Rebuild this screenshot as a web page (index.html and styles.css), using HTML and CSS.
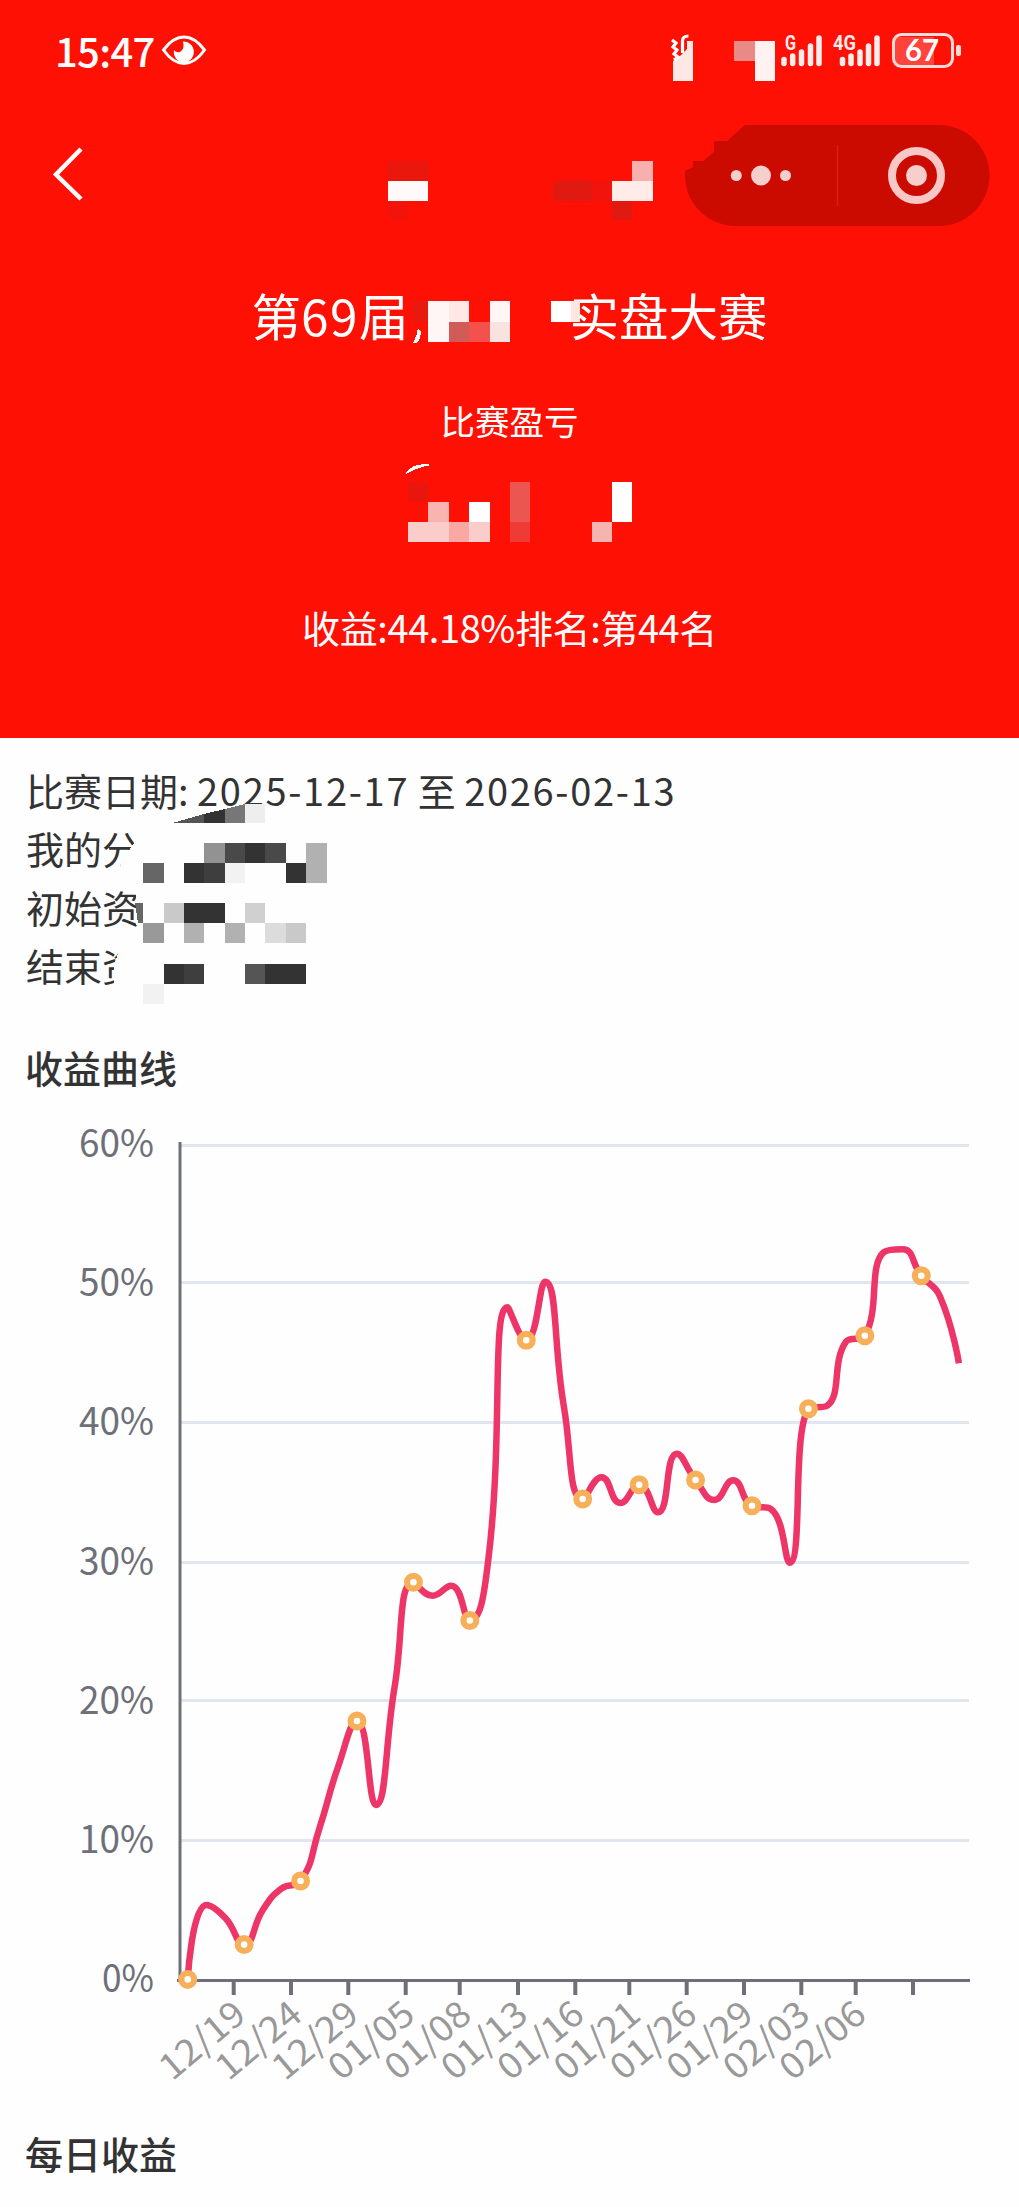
FILE: index.html
```html
<!DOCTYPE html>
<html lang="zh-CN">
<head>
<meta charset="utf-8">
<title>收益曲线</title>
<link rel="stylesheet" href="styles.css">
</head>
<body>
<header class="hero">
  <div class="status">
    <span class="clock">15:47</span>
    <svg class="eye" width="46" height="32" viewBox="0 0 46 32"><path d="M2.500 16Q12 3 23 3T43.500 16Q34 29.500 23 29.500T2.500 16Z" fill="none" stroke="#fff" stroke-width="3"/><path d="M22 7.500A10 10.500 0 1 1 13 16Q15 19 19 18Q24 15 22 7.500Z" fill="#fff"/></svg>
    <svg class="signals" width="300" height="60" viewBox="670 25 300 60">
      <path d="M673 81V61L680 56L687 49V41H693V81Z" fill="#ffe8e4"/>
      <path d="M672 40l4 3-3 4 4 3-3 4 4 3-4 3M682.500 53V41q0-5 6-5" fill="none" stroke="#fff" stroke-width="3.200"/>
      <path d="M734 41h21v20h-21z" fill="#ea8a86"/><path d="M755 41h20v40h-20z" fill="#fff2f0"/>
      <g stroke="#ffeceb" stroke-width="5.500" stroke-linecap="round"><path d="M784 59.500V63.500M792.700 56V63.500M801.500 52V63.500M810.500 46V63.500M819 38V63.500M842.500 59.500V63.500M851 56V63.500M860 52V63.500M868.500 46V63.500M877 38V63.500"/></g>
      <text class="net" x="785" y="50" textLength="11" lengthAdjust="spacingAndGlyphs">G</text>
      <text class="net" x="833" y="50" textLength="23" lengthAdjust="spacingAndGlyphs">4G</text>
      <path d="M894 37h40v28h-40z" fill="#ff443c"/>
      <rect x="893.500" y="34.500" width="59" height="32" rx="8" fill="none" stroke="#ffdad8" stroke-width="3"/>
      <rect x="956" y="45" width="5" height="11" rx="2" fill="#ffdad8"/>
      <text class="level" x="905" y="61" textLength="34" lengthAdjust="spacingAndGlyphs">67</text>
    </svg>
  </div>
  <nav class="nav">
    <svg width="32" height="56" viewBox="0 0 32 56"><path d="M29 2L4 27.500L29 52" fill="none" stroke="#fff" stroke-width="4.500"/></svg>
    <svg width="306" height="104" viewBox="684 123 306 104">
      <path d="M745 125H939A50.500 50.500 0 0 1 939 226H736A51 51 0 0 1 685 171L693 167V161H703L714 152V141H727Z" fill="#cb0b00"/>
      <path d="M837.500 145V206" stroke="#dc1c12" stroke-width="1.500"/>
      <g fill="#f6cecc"><circle cx="736.300" cy="175.500" r="5.500"/><circle cx="761" cy="175.500" r="10"/><circle cx="785.500" cy="175.500" r="5.500"/><circle cx="916.500" cy="175.500" r="10.500"/></g>
      <circle cx="916.500" cy="175.500" r="24.500" fill="none" stroke="#f9c8c6" stroke-width="8"/>
    </svg>
  </nav>
  <h1 class="title"><span>第<span class="num">69</span>届</span><span>实盘大赛</span></h1>
  <p class="subtitle">比赛盈亏</p>
  <p class="result">收益:44.18%排名:第44名</p>
  <svg class="mosaic" width="1019" height="738" viewBox="0 0 1019 738" shape-rendering="crispEdges">
    <path d="M388 161h40v20h-40z" fill="#ea170d"/><path d="M388 201h20v19h-20z" fill="#f2130a"/><path d="M388 181h40v20h-40z" fill="#fffafa"/>
    <path d="M553 181h38v20h-38zM612 201h20v19h-20z" fill="#e01a10"/><path d="M591 181h21v20h-21z" fill="#f2130c"/><path d="M632 161h21v20h-21z" fill="#f7b0ad"/><path d="M612 181h41v20h-41z" fill="#ffebe8"/>
    <path d="M412 301h16v21h-16z" fill="#e81a10"/><path d="M413 343q4-7 5-15l3 4q-1 8-4 11z" fill="#fff"/>
    <path d="M428 301h21v41h-21zM490 301h20v21h-20z" fill="#fff6f5"/><path d="M449 301h20v21h-20z" fill="#ffe8e6"/><path d="M449 322h20v20h-20z" fill="#d15b56"/><path d="M469 322h21v20h-21z" fill="#f4504c"/><path d="M490 322h20v20h-20z" fill="#f8e3e1"/>
    <path d="M551 301h20v21h-20z" fill="#fff"/><path d="M571 301h9v21h-9z" fill="#ffe6df"/>
    <path d="M406 473.500Q413 463 429 465Q417 467 406 473.500Z" fill="#fff" stroke="#fff"/>
    <path d="M408 482h20v19h-20z" fill="#e8160d"/><path d="M428 502h21v20h-21z" fill="#f9b3b0"/><path d="M469 502h21v20h-21zM612 482h20v40h-20z" fill="#fff"/>
    <path d="M408 522h41v20h-41zM469 522h21v20h-21z" fill="#faccca"/><path d="M449 522h20v20h-20z" fill="#fba7a3"/><path d="M510 482h20v40h-20z" fill="#ec5650"/><path d="M510 522h20v20h-20z" fill="#ee3b33"/><path d="M592 522h20v20h-20z" fill="#f6b4b1"/>
  </svg>
</header>
<main class="content">
  <section class="info">
    <p class="dates">比赛日期: <span class="date">2025-12-17</span> 至 <span class="date">2026-02-13</span></p><p>我的分</p><p>初始资</p><p>结束资</p>
    <svg class="mosaic" width="400" height="230" viewBox="0 780 400 230" shape-rendering="crispEdges">
      <path d="M133 830L134 843L121 863V872H142V830ZM121 945L114 965V988H150V945ZM136 888V925H150V888Z" fill="#fefefe"/>
      <path d="M174 822.500L204 814V822.500Z" fill="#555"/><path d="M204 822.500V814L225 809V822.500Z" fill="#333"/><path d="M225 822.500V809L245 804V822.500Z" fill="#777"/><path d="M245 804h20v18.500h-20z" fill="#eee"/>
      <path d="M204 843h21v20h-21z" fill="#929292"/><path d="M225 843h20v20h-20zM265 843h21v20h-21z" fill="#494949"/><path d="M245 843h20v20h-20zM184 863h20v20h-20zM286 863h20v20h-20zM184 903h41v20h-41zM164 964h20v20h-20zM265 964h41v20h-41z" fill="#333"/>
      <path d="M306 843h21v40h-21zM184 923h20v20h-20zM225 923h20v20h-20z" fill="#b1b1b1"/><path d="M143 863h21v20h-21zM135 903h8v20h-5z" fill="#666"/><path d="M204 863h21v20h-21zM184 964h20v20h-20z" fill="#3e3e3e"/><path d="M225 863h20v20h-20zM143 984h21v20h-21z" fill="#f2f2f2"/>
      <path d="M164 903h20v20h-20zM286 923h20v20h-20z" fill="#c9c9c9"/><path d="M245 903h20v20h-20z" fill="#d0d0d0"/><path d="M143 923h21v20h-21z" fill="#999"/><path d="M265 923h21v20h-21z" fill="#dcdcdc"/><path d="M245 964h20v20h-20z" fill="#555"/>
    </svg>
  </section>
  <h2 class="heading">收益曲线</h2>
  <svg class="chart" width="1019" height="1000" viewBox="0 1100 1019 1000">
    <path d="M180 1145.500H969M180 1282.500H969M180 1422.500H969M180 1562.500H969M180 1700.500H969M180 1840.500H969" stroke="#e0e6ee" stroke-width="3"/>
    <path d="M180 1142V1981M177 1980.500H970" stroke="#6e7079" stroke-width="3"/>
    <g id="ticks" stroke="#6e7079" stroke-width="4"></g>
    <g id="ylabels" class="ylabel"></g>
    <g id="xlabels" class="xlabel"></g>
    <path id="curve" fill="none" stroke="#ee3568" stroke-width="6.500" stroke-linejoin="bevel"/>
    <g id="marks" fill="#fff" stroke="#f7af5a" stroke-width="6.200"></g>
  </svg>
  <h2 class="heading">每日收益</h2>
</main>
<script src="chart.js"></script>
</body>
</html>
```
FILE: styles.css
```css
* { box-sizing: border-box; }
body { margin: 0; width: 1019px; height: 2207px; overflow: hidden; background: #fefefe; color: #333; font-family: "Noto Sans CJK SC", sans-serif; }
h1, h2, p { margin: 0; font-weight: 400; }
svg { display: block; flex: none; }
.hero { position: relative; height: 738px; background: #ff1005; color: #fff; text-align: center; }
.status { display: flex; align-items: flex-start; height: 123px; padding: 25px 49px 0 55px; }
.clock { width: 106px; text-align: left; font-size: 40px; font-weight: 500; line-height: 50px; letter-spacing: -0.700px; white-space: nowrap; }
.eye { margin-top: 9px; }
.signals { margin-left: auto; }
.net { font: 700 21px Roboto, sans-serif; fill: #ffeceb; }
.level { font: 700 30px Lato, sans-serif; fill: #fff; }
.nav { display: flex; justify-content: space-between; align-items: center; height: 104px; padding: 0 29px 0 52px; }
.title { display: flex; justify-content: center; gap: 161px; height: 60px; margin-top: 58px; line-height: 60px; font-size: 49.500px; }
.num { letter-spacing: 1.500px; }
.subtitle { height: 50px; margin-top: 50px; line-height: 50px; font-size: 34.500px; }
.result { height: 50px; margin-top: 157px; line-height: 50px; font-size: 38px; letter-spacing: -0.400px; }
.mosaic { position: absolute; left: 0; top: 0; }
.content { padding-top: 23px; }
.info { position: relative; padding-left: 26px; font-size: 38px; line-height: 58.300px; }
.info .mosaic { top: 19px; }
.dates { white-space: nowrap; }
.date { letter-spacing: 1.700px; }
.heading { padding-left: 25px; font-size: 38px; line-height: 60px; font-weight: 500; margin-top: 43px; }
.chart { margin-top: 3px; }
.chart + .heading { margin-top: 23px; }
.ylabel { font: 400 38px "Noto Sans CJK SC", sans-serif; fill: #6e7079; }
.xlabel { font: 400 35px "Noto Sans CJK SC", sans-serif; fill: #999; text-anchor: end; }
```
FILE: chart.js
```js
const ys = [1979.4, 1905, 1918, 1944.6, 1909.7, 1888.4, 1881, 1828.4, 1766.5, 1721, 1805, 1687, 1582.3, 1595.7, 1585.7, 1620.5, 1556.7, 1307.3, 1340.3, 1281.7, 1406.7, 1499, 1477.3, 1503, 1484.7, 1512.3, 1453.7, 1480, 1500, 1480.3, 1505.7, 1509, 1562.7, 1408.7, 1405.7, 1341.7, 1335.7, 1252.3, 1249.3, 1275.7, 1296.7, 1363.3];
const pts = ys.map((y, i) => [187.7 + 18.81 * i, y]);
const clamp = (v, a, b) => Math.max(Math.min(a, b), Math.min(Math.max(a, b), v));

// Smooth line whose control points never overshoot the neighbouring values
let d = `M${pts[0]}`;
let out = pts[0];
for (let i = 1; i < pts.length; i++) {
  const prev = pts[i - 1], cur = pts[i], next = pts[i + 1];
  let inn = cur, nextOut = cur;
  if (next) {
    const lp = Math.hypot(cur[0] - prev[0], cur[1] - prev[1]);
    const ln = Math.hypot(next[0] - cur[0], next[1] - cur[1]);
    const r = ln / (ln + lp);
    nextOut = cur.map((c, k) => clamp(c + (next[k] - prev[k]) * 0.5 * r, c, next[k]));
    inn = cur.map((c, k) => clamp(c - (nextOut[k] - c) * lp / ln, prev[k], c));
    nextOut = cur.map((c, k) => c + (c - inn[k]) * ln / lp);
  }
  d += `C${out} ${inn} ${cur}`;
  out = nextOut;
}
document.getElementById('curve').setAttribute('d', d);
document.getElementById('marks').innerHTML = pts.filter((p, i) => i % 3 === 0)
  .map(p => `<circle cx="${p[0]}" cy="${p[1]}" r="6.4"/>`).join('');
document.getElementById('ticks').innerHTML = [233.7, 291, 348.3, 405.7, 459.7, 518, 575.3, 629.3, 686.7, 744, 801.3, 855.7, 913]
  .map(x => `<path d="M${x} 1980V1995"/>`).join('');
document.getElementById('ylabels').innerHTML = [60, 50, 40, 30, 20, 10, 0]
  .map((v, i) => `<text x="${v ? 79 : 102}" y="${1157 + 139.2 * i}" textLength="${v ? 75 : 52}" lengthAdjust="spacingAndGlyphs">${v}%</text>`).join('');
document.getElementById('xlabels').innerHTML = ['12/19', '12/24', '12/29', '01/05', '01/08', '01/13', '01/16', '01/21', '01/26', '01/29', '02/03', '02/06']
  .map((t, i) => `<text transform="translate(${248 + 56.4 * i} 2018) rotate(-40)" textLength="99" lengthAdjust="spacingAndGlyphs">${t}</text>`).join('');
```
